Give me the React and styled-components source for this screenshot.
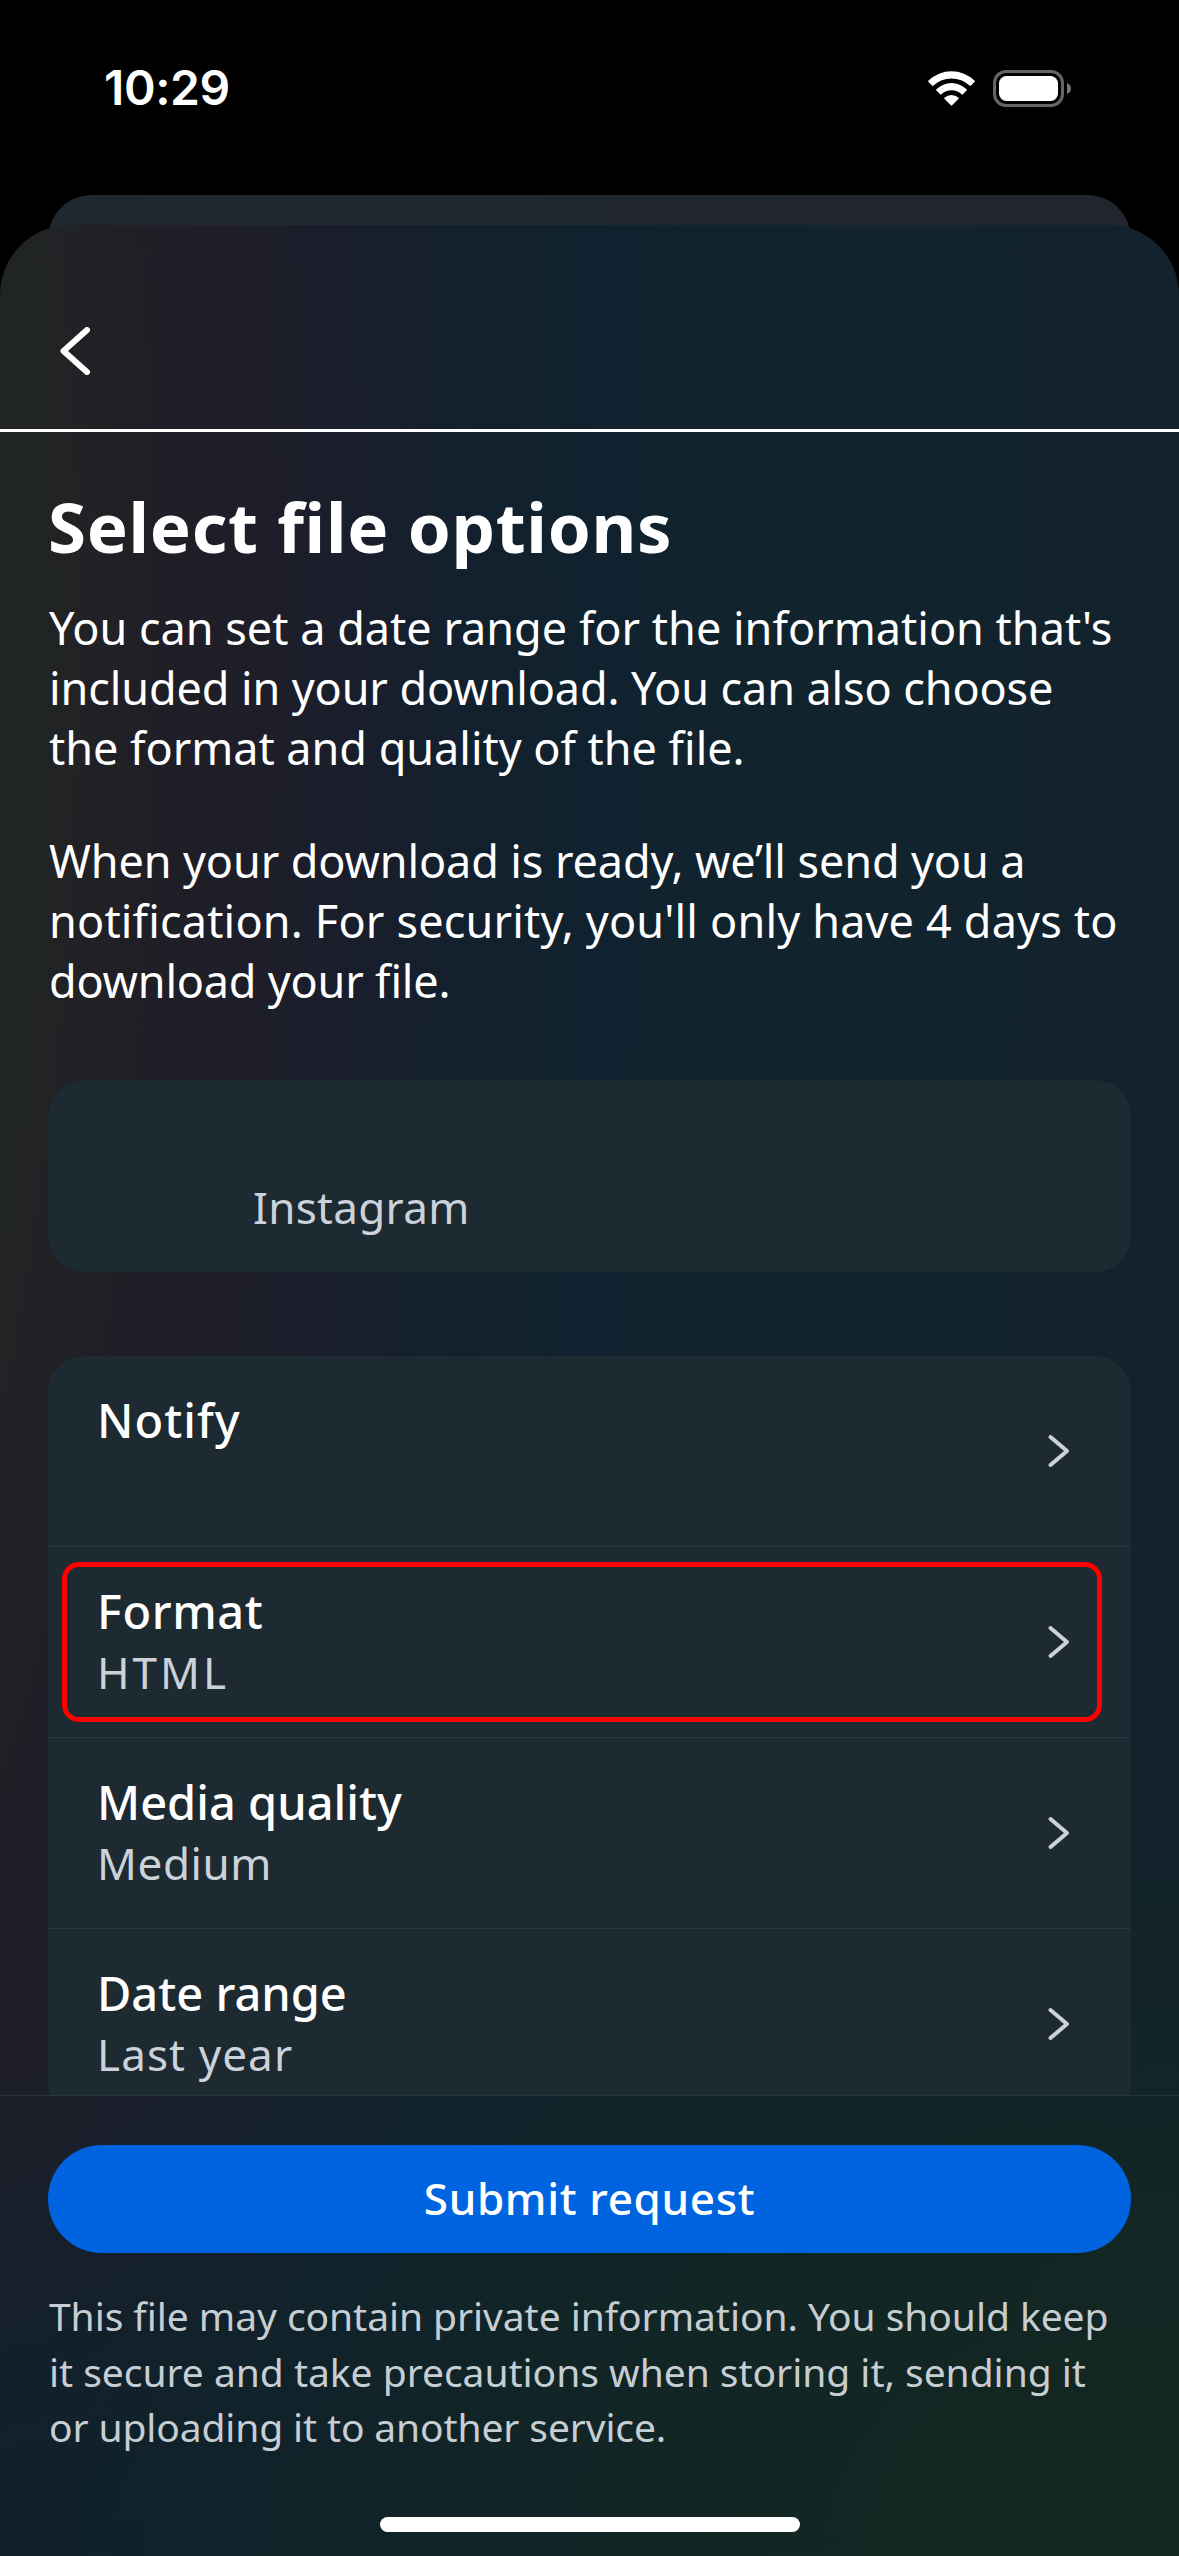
import React from "react";
import styled, { createGlobalStyle } from "styled-components";

const Global = createGlobalStyle`
  * { box-sizing: border-box; }
  body { margin: 0; background: #000; }
`;

const Screen = styled.div`
  width: 1179px;
  height: 2556px;
  display: flex;
  flex-direction: column;
  overflow: hidden;
  background: #000;
  color: #fff;
  font-family: "Noto Sans", "Open Sans", sans-serif;
`;

const StatusBar = styled.header`
  height: 195px;
  padding: 0 108px 19px 104px;
  display: flex;
  align-items: center;
  justify-content: space-between;
`;

const Clock = styled.time`
  font: 600 48px/58px Inter, sans-serif;
  letter-spacing: -0.4px;
`;

const StatusIcons = styled.div`
  display: flex;
  align-items: center;
  gap: 18px;
  svg { display: block; }
`;

const BackSheet = styled.div`
  flex: none;
  height: 110px;
  margin: 0 48px -80px;
  border-radius: 44px 44px 0 0;
  background: linear-gradient(90deg, #20282f, #21262c);
`;

const Sheet = styled.main`
  position: relative;
  flex: 1;
  min-height: 0;
  display: flex;
  flex-direction: column;
  border-radius: 70px 70px 0 0;
  overflow: hidden;
  background:
    radial-gradient(ellipse 1150px 850px at 1179px 2331px, #122722 0%, #122722 25%, rgba(18, 39, 34, 0) 100%),
    radial-gradient(ellipse 1200px 520px at 200px 2331px, #0f212c 0%, rgba(15, 33, 44, 0.7) 40%, rgba(15, 33, 44, 0) 100%),
    radial-gradient(ellipse 1480px 5030px at -300px 400px, #202424 21%, #212225 26.5%, #201f26 29.5%, #1e1e29 37.5%, #191e2c 45%, #13202d 51.5%, #10222f 60.8%, #11242d 74%, #12222e 100%);
`;

const NavBar = styled.nav`
  height: 207px;
  flex: none;
  padding: 102px 0 0 57px;
  border-bottom: 3px solid #fff;
`;

const Content = styled.section`
  flex: none;
  height: 1663px;
  padding: 47px 48px 0;
  overflow: hidden;
`;

const Title = styled.h1`
  margin: 0 0 25px;
  font-size: 69px;
  line-height: 94px;
  font-weight: 700;
  letter-spacing: ${(p) => p.$ls}px;
  white-space: nowrap;
`;

const Paragraph = styled.p`
  margin: 0 0 53px;
  padding-left: 1px;
  font-size: 45px;
  line-height: 60px;
`;

const Line = styled.span`
  display: block;
  white-space: nowrap;
  letter-spacing: ${(p) => p.$ls || 0}px;
`;

const Card = styled.div`
  border-radius: 36px;
  background: #1d2a32;
`;

const AccountCard = styled(Card)`
  height: 192px;
  margin-top: 69px;
  padding: 97px 0 0 205px;
`;

const Secondary = styled.div`
  color: #cbd2d9;
  font-size: 44px;
  line-height: 60px;
  white-space: nowrap;
  letter-spacing: ${(p) => p.$ls || 0}px;
`;

const OptionList = styled(Card)`
  margin-top: 84px;
`;

const OptionRow = styled.div`
  position: relative;
  height: 191px;
  padding: 33px 61px 0 49px;
  display: flex;
  justify-content: space-between;
  border-bottom: 1px solid #2a3740;
  &:last-child { border-bottom: 0; }
`;

const Highlight = styled.div`
  position: absolute;
  left: 14px;
  top: 15px;
  width: 1040px;
  height: 160px;
  border: 5px solid #ff0000;
  border-radius: 17px;
`;

const OptionLabel = styled.div`
  font-size: 47px;
  line-height: 62px;
  font-weight: 500;
  white-space: nowrap;
  letter-spacing: ${(p) => p.$ls || 0}px;
`;

const RowArrow = styled.svg`
  display: block;
  margin-top: 45px;
`;

const Footer = styled.footer`
  flex: 1;
  display: flex;
  flex-direction: column;
  padding: 49px 48px 24px;
  border-top: 1px solid #26343c;
`;

const SubmitButton = styled.button`
  flex: none;
  height: 108px;
  border: 0;
  padding: 0 0 2px;
  border-radius: 54px;
  background: #0064e0;
  color: #fff;
  font: 500 44px/60px "Noto Sans", sans-serif;
  letter-spacing: ${(p) => p.$ls}px;
`;

const Notice = styled.p`
  margin: 35px 0 0;
  padding-left: 1px;
  color: #c6cdd3;
  font-size: 39px;
  line-height: 55.5px;
`;

const HomeIndicator = styled.div`
  width: 420px;
  height: 15px;
  margin: auto auto 0;
  border-radius: 8px;
  background: #fff;
`;

const options = [
  { label: "Notify", labelSpacing: 1, value: "" },
  { label: "Format", labelSpacing: 0.6, value: "HTML", valueSpacing: 3 },
  { label: "Media quality", value: "Medium", valueSpacing: 0.6 },
  { label: "Date range", labelSpacing: 0, value: "Last year", valueSpacing: 1.1 },
];

const highlightedOption = "Format";

function WifiIcon() {
  return (
    <svg width="47" height="35" viewBox="0 0 47 35" fill="#fff">
      <path d="M.5 9.600a33 33 0 0 1 46 0 .9.9 0 0 1 0 1.300l-3.600 3.700a.9.9 0 0 1-1.300 0 26.500 26.500 0 0 0-36.200 0 .9.9 0 0 1-1.300 0l-3.600-3.700a.9.9 0 0 1 0-1.300Z" />
      <path d="M8.400 18.200a21.800 21.800 0 0 1 30.200 0 .9.9 0 0 1 0 1.300l-3.700 3.800a.9.9 0 0 1-1.300 0 14.800 14.800 0 0 0-20.200 0 .9.9 0 0 1-1.300 0l-3.700-3.800a.9.9 0 0 1 0-1.300Z" />
      <path d="M16.700 26.600a10.300 10.300 0 0 1 13.600 0 .9.9 0 0 1 0 1.400l-6.100 6.300a.9.9 0 0 1-1.400 0L16.700 28a.9.9 0 0 1 0-1.400Z" />
    </svg>
  );
}

function BatteryIcon() {
  return (
    <svg width="78" height="37" viewBox="0 0 78 37">
      <rect x="1.500" y="1.500" width="68" height="34" rx="11.500" fill="none" stroke="#666" strokeWidth="3" />
      <rect x="6" y="6" width="59" height="25" rx="7.500" fill="#fff" />
      <path d="M74 13c2.600 1 4 3 4 5.500S76.600 23 74 24Z" fill="#777" />
    </svg>
  );
}

export default function App() {
  return (
    <Screen>
      <Global />
      <StatusBar>
        <Clock>10:29</Clock>
        <StatusIcons>
          <WifiIcon />
          <BatteryIcon />
        </StatusIcons>
      </StatusBar>
      <BackSheet />
      <Sheet>
        <NavBar>
          <svg width="36" height="48" viewBox="0 0 36 48" fill="none" stroke="#fff" strokeWidth="6" strokeLinecap="round" strokeLinejoin="round">
            <path d="M30 3 6.500 24 30 45" />
          </svg>
        </NavBar>
        <Content>
          <Title $ls={0.68}>Select file options</Title>
          <Paragraph>
            <Line>You can set a date range for the information that's</Line>
            <Line $ls={-0.11}>included in your download. You can also choose</Line>
            <Line $ls={-0.03}>the format and quality of the file.</Line>
          </Paragraph>
          <Paragraph>
            <Line $ls={-0.11}>When your download is ready, we’ll send you a</Line>
            <Line $ls={0.17}>notification. For security, you'll only have 4 days to</Line>
            <Line $ls={-0.2}>download your file.</Line>
          </Paragraph>
          <AccountCard>
            <Secondary $ls={0.3}>Instagram</Secondary>
          </AccountCard>
          <OptionList>
            {options.map((o) => (
              <OptionRow key={o.label}>
                {o.label === highlightedOption && <Highlight />}
                <div>
                  <OptionLabel $ls={o.labelSpacing}>{o.label}</OptionLabel>
                  <Secondary $ls={o.valueSpacing}>{o.value}</Secondary>
                </div>
                <RowArrow width="23" height="34" viewBox="0 0 23 34" fill="none" stroke="#cbd2d9" strokeWidth="4" strokeLinecap="round" strokeLinejoin="round">
                  <path d="M3.500 3 20 17 3.500 31" />
                </RowArrow>
              </OptionRow>
            ))}
          </OptionList>
        </Content>
        <Footer>
          <SubmitButton $ls={0.65}>Submit request</SubmitButton>
          <Notice>
            <Line $ls={-0.06}>This file may contain private information. You should keep</Line>
            <Line $ls={-0.03}>it secure and take precautions when storing it, sending it</Line>
            <Line $ls={-0.13}>or uploading it to another service.</Line>
          </Notice>
          <HomeIndicator />
        </Footer>
      </Sheet>
    </Screen>
  );
}
